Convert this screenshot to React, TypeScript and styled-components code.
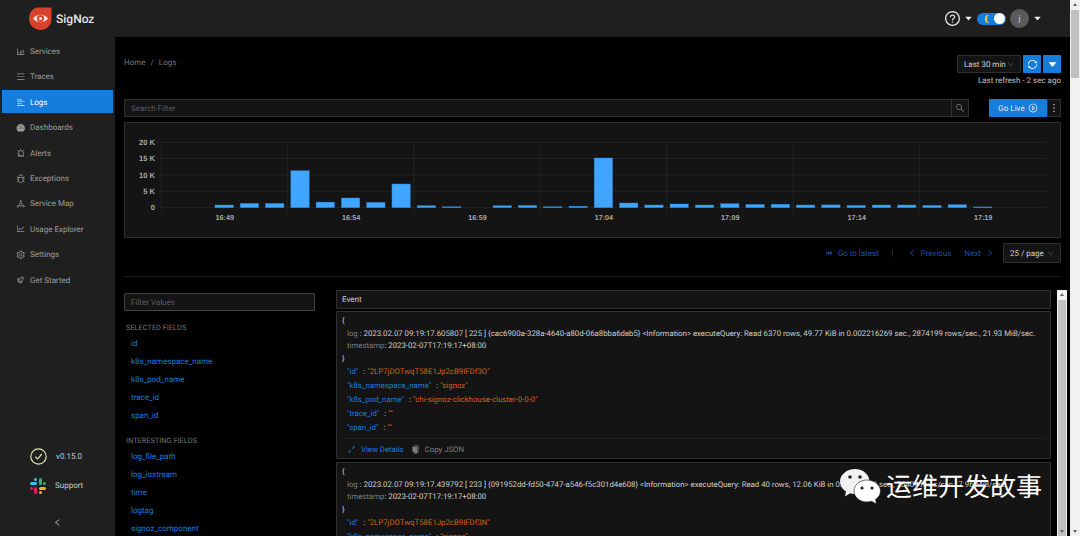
import React from 'react';
import styled, { createGlobalStyle } from 'styled-components';
import {
  AiFillCopy,
  AiFillDashboard,
  AiOutlineAlert,
  AiOutlineAlignLeft,
  AiOutlineBarChart,
  AiOutlineBug,
  AiOutlineCaretDown,
  AiOutlineDeploymentUnit,
  AiOutlineDown,
  AiOutlineExpandAlt,
  AiOutlineFastBackward,
  AiOutlineLeft,
  AiOutlineLineChart,
  AiOutlineMenu,
  AiOutlineMore,
  AiOutlinePlayCircle,
  AiOutlineQuestionCircle,
  AiOutlineRight,
  AiOutlineRocket,
  AiOutlineSearch,
  AiOutlineSetting,
  AiOutlineSync,
} from 'react-icons/ai';

const TiltedRocket = styled(AiOutlineRocket)`
  transform: rotate(45deg);
`;

const navItems = [
  { label: 'Services', icon: AiOutlineBarChart },
  { label: 'Traces', icon: AiOutlineMenu },
  { label: 'Logs', icon: AiOutlineAlignLeft, active: true },
  { label: 'Dashboards', icon: AiFillDashboard },
  { label: 'Alerts', icon: AiOutlineAlert },
  { label: 'Exceptions', icon: AiOutlineBug },
  { label: 'Service Map', icon: AiOutlineDeploymentUnit },
  { label: 'Usage Explorer', icon: AiOutlineLineChart },
  { label: 'Settings', icon: AiOutlineSetting },
  { label: 'Get Started', icon: TiltedRocket },
];

const selectedFields = ['id', 'k8s_namespace_name', 'k8s_pod_name', 'trace_id', 'span_id'];
const interestingFields = ['log_file_path', 'log_iostream', 'time', 'logtag', 'signoz_component'];

const bars = [
  2.7, 4.3, 4.3, 37, 5.6, 9.7, 5.3, 23.7, 2, 1, 0, 2, 2.3, 1, 1.5, 49.7, 4.7, 2.7, 3.7, 2.7, 4, 3.3,
  3.5, 2.7, 2.8, 2.3, 2.7, 2.7, 2.3, 3, 0.8,
];
const yTicks = ['20 K', '15 K', '10 K', '5 K', '0'];
const xTicks = ['16:49', '16:54', '16:59', '17:04', '17:09', '17:14', '17:19'];

const logs = [
  {
    line: '2023.02.07 09:19:17.605807 [ 225 ] {cac6900a-328a-4640-a80d-06a8bba6deb5} <Information> executeQuery: Read 6370 rows, 49.77 KiB in 0.002216269 sec., 2874199 rows/sec., 21.93 MiB/sec.',
    id: '2LP7jDOTwqT58E1Jp2cB9IFDf3O',
    pod: 'chi-signoz-clickhouse-cluster-0-0-0',
  },
  {
    line: '2023.02.07 09:19:17.439792 [ 233 ] {091952dd-fd50-4747-a546-f5c301d4e608} <Information> executeQuery: Read 40 rows, 12.06 KiB in 0.00151488 sec., 26404 rows/sec., 7.96 MiB/sec.',
    id: '2LP7jDOTwqT58E1Jp2cB9IFDf3N',
    pod: 'chi-signoz-clickhouse-cluster-0-0-0',
  },
];

const GlobalStyle = createGlobalStyle`
  html, body {
    margin: 0;
    height: 100%;
    overflow: hidden;
    background: #000;
  }
  * {
    box-sizing: border-box;
  }
  body {
    font-family: Roboto, "Liberation Sans", sans-serif;
    font-size: 8px;
    text-rendering: geometricPrecision;
    color: rgba(255, 255, 255, 0.8);
  }
`;

const Page = styled.div`
  position: relative;
  display: flex;
  width: 1080px;
  height: 536px;
  overflow: hidden;
`;

const Frame = styled.div`
  flex: 1;
  min-width: 0;
  display: flex;
  flex-direction: column;
`;

const Header = styled.header`
  height: 37px;
  flex: none;
  display: flex;
  align-items: center;
  padding: 0 28px 0 29px;
  background: #1f1f1f;
`;

const Brand = styled.div`
  display: flex;
  align-items: center;
  gap: 4px;
  font-size: 12px;
  font-weight: 500;
  color: #e4e4e4;
`;

const HeaderTools = styled.div`
  margin-left: auto;
  display: flex;
  align-items: center;
  color: #eee;
  svg {
    display: block;
  }
`;

const Toggle = styled.div`
  position: relative;
  width: 29px;
  height: 12px;
  margin: 0 4px 0 4px;
  border-radius: 6px;
  background: #177ddc;
`;

const Knob = styled.span`
  position: absolute;
  right: 1px;
  top: 0.5px;
  width: 11px;
  height: 11px;
  border-radius: 50%;
  background: #fff;
`;

const Moon = styled.span`
  position: absolute;
  left: 8px;
  top: 2px;
  width: 6px;
  height: 8px;
  border-radius: 50%;
  box-shadow: inset 2px 0 0 #f5c542;
`;

const Avatar = styled.div`
  width: 19px;
  height: 19px;
  margin-right: 4px;
  border-radius: 50%;
  background: #5a5a5a;
  display: flex;
  align-items: center;
  justify-content: center;
  color: #ddd;
`;

const Body = styled.div`
  flex: 1;
  min-height: 0;
  display: flex;
`;

const Sidebar = styled.aside`
  width: 115px;
  flex: none;
  display: flex;
  flex-direction: column;
  padding: 2.5px 2px 0;
  background: #1f1f1f;
`;

const NavItem = styled.div<{ $active?: boolean }>`
  height: 23px;
  flex: none;
  margin-bottom: 2.4px;
  padding-left: 14px;
  padding-top: 1px;
  display: flex;
  align-items: center;
  gap: 4.5px;
  color: ${(p) => (p.$active ? '#fff' : 'rgba(255, 255, 255, 0.55)')};
  background: ${(p) => (p.$active ? '#177ddc' : 'transparent')};
  svg {
    font-size: 9.5px;
    flex: none;
  }
`;

const SideFooter = styled.div`
  margin-top: auto;
  display: flex;
  flex-direction: column;
  padding-left: 28px;
  padding-bottom: 6px;
`;

const FooterRow = styled.div`
  display: flex;
  align-items: center;
  gap: 9px;
  height: 17px;
  margin-bottom: 12px;
  color: rgba(255, 255, 255, 0.75);
`;

const Collapse = styled.div`
  margin-top: 12px;
  padding-left: 23px;
  color: rgba(255, 255, 255, 0.7);
  font-size: 9px;
  line-height: 10px;
`;

const Main = styled.main`
  flex: 1;
  min-width: 0;
  display: flex;
  flex-direction: column;
  padding: 18px 3px 0 9px;
  background: #000;
`;

const Section = styled.div`
  margin-right: 6px;
  flex: none;
`;

const TopRow = styled(Section)`
  display: flex;
  justify-content: space-between;
  height: 31px;
`;

const Breadcrumb = styled.div`
  display: flex;
  gap: 5px;
  height: 15px;
  align-items: center;
  color: rgba(255, 255, 255, 0.45);
`;

const TimeBox = styled.div`
  display: flex;
  flex-direction: column;
  align-items: flex-end;
`;

const TimeControls = styled.div`
  display: flex;
  gap: 2px;
  height: 18px;
`;

const SelectBox = styled.div<{ $w: number }>`
  width: ${(p) => p.$w}px;
  height: 100%;
  padding: 0 6px 0 6px;
  display: flex;
  align-items: center;
  justify-content: space-between;
  white-space: nowrap;
  background: #141414;
  border: 1px solid #303030;
  border-radius: 1px;
  svg {
    font-size: 7px;
    flex: none;
    color: rgba(255, 255, 255, 0.3);
  }
`;

const SquareButton = styled.div`
  width: 18px;
  height: 18px;
  display: flex;
  align-items: center;
  justify-content: center;
  background: #177ddc;
  border-radius: 1px;
  color: #fff;
  font-size: 11px;
`;

const RefreshNote = styled.div`
  margin-top: 2px;
  line-height: 12px;
  color: rgba(255, 255, 255, 0.75);
`;

const SearchRow = styled(Section)`
  margin-top: 13px;
  height: 18px;
  display: flex;
  align-items: stretch;
`;

const SearchField = styled.div`
  flex: 1;
  display: flex;
  align-items: center;
  padding-left: 6px;
  background: #141414;
  border: 1px solid #303030;
  border-radius: 1px 0 0 1px;
  color: rgba(255, 255, 255, 0.3);
`;

const SearchButton = styled.div`
  width: 18px;
  margin-left: -1px;
  display: flex;
  align-items: center;
  justify-content: center;
  border: 1px solid #303030;
  background: #141414;
  color: rgba(255, 255, 255, 0.45);
  font-size: 10px;
`;

const GoLive = styled.div`
  width: 58px;
  margin-left: 20px;
  display: flex;
  align-items: center;
  justify-content: center;
  gap: 3px;
  background: #177ddc;
  border-radius: 1px;
  color: rgba(255, 255, 255, 0.9);
  svg {
    font-size: 10px;
  }
`;

const MoreButton = styled.div`
  width: 14px;
  display: flex;
  align-items: center;
  justify-content: center;
  background: #141414;
  border: 1px solid #303030;
  color: #eee;
  font-size: 14px;
`;

const ChartCard = styled(Section)`
  margin-top: 5px;
  height: 116px;
  background: #141414;
  border: 1px solid #303030;
  border-radius: 1px;
  svg {
    display: block;
  }
`;

const Pager = styled(Section)`
  margin-top: 5px;
  height: 20px;
  display: flex;
  align-items: center;
  justify-content: flex-end;
  color: #1554ad;
`;

const PagerLink = styled.div<{ $gap?: number }>`
  display: flex;
  align-items: center;
  gap: 5px;
  margin-right: ${(p) => p.$gap ?? 0}px;
  svg {
    font-size: 8px;
  }
`;

const PagerRule = styled.span`
  width: 1px;
  height: 7px;
  margin-right: 15px;
  background: #222;
`;

const PagerSelect = styled(SelectBox)`
  color: rgba(255, 255, 255, 0.8);
`;

const Divider = styled(Section)`
  margin-top: 13px;
  height: 1px;
  background: #1a1a1a;
`;

const LogsRow = styled.div`
  flex: 1;
  min-height: 0;
  margin-top: 13px;
  display: flex;
`;

const FieldsPanel = styled.div`
  width: 191px;
  flex: none;
  padding-top: 3px;
  overflow: hidden;
`;

const FilterInput = styled.div`
  height: 18px;
  display: flex;
  align-items: center;
  padding-left: 6px;
  margin-bottom: 9.5px;
  background: #141414;
  border: 1px solid #434343;
  border-radius: 1px;
  color: rgba(255, 255, 255, 0.3);
`;

const FieldTitle = styled.div<{ $top?: number }>`
  margin-top: ${(p) => p.$top ?? 0}px;
  padding-left: 2px;
  height: 14px;
  line-height: 14px;
  font-size: 7.4px;
  color: rgba(255, 255, 255, 0.45);
`;

const FieldName = styled.div`
  height: 18px;
  line-height: 18px;
  padding-left: 7px;
  color: #177ddc;
`;

const EventColumn = styled.div`
  width: 715px;
  margin-left: 21px;
  flex: none;
  display: flex;
  flex-direction: column;
  gap: 2px;
  overflow: hidden;
`;

const EventHeader = styled.div`
  height: 19px;
  flex: none;
  display: flex;
  align-items: center;
  padding-left: 5px;
  background: #141414;
  border: 1px solid #303030;
`;

const LogCard = styled.article`
  height: 148px;
  flex: none;
  margin-bottom: 1px;
  padding: 3px 5px 0;
  font-size: 7.8px;
  background: #141414;
  border: 1px solid #303030;
  border-radius: 1px;
`;

const Line = styled.div<{ $indent?: boolean }>`
  height: 12.5px;
  line-height: 12.5px;
  padding-left: ${(p) => (p.$indent ? 5 : 0)}px;
  white-space: nowrap;
  overflow: hidden;
`;

const Muted = styled.span`
  color: rgba(255, 255, 255, 0.45);
`;

const FieldLine = styled.div`
  height: 14px;
  line-height: 14px;
  padding-left: 5px;
  white-space: nowrap;
`;

const FieldKey = styled.span`
  color: #177ddc;
`;

const FieldColon = styled.span`
  margin: 0 2px 0 5px;
`;

const FieldValue = styled.span`
  color: #d4611a;
`;

const CardActions = styled.div`
  margin-top: 3px;
  height: 21px;
  padding-left: 5px;
  display: flex;
  align-items: center;
  gap: 7px;
  border-top: 1px solid #1f1f1f;
`;

const ActionLink = styled.span<{ $muted?: boolean }>`
  display: flex;
  align-items: center;
  gap: 5px;
  color: ${(p) => (p.$muted ? 'rgba(255, 255, 255, 0.45)' : '#177ddc')};
  svg {
    font-size: 9px;
  }
`;

const ScrollTrack = styled.div`
  position: relative;
  width: 10px;
  flex: none;
  background: #f1f1f1;
`;

const InnerScroll = styled(ScrollTrack)`
  margin-left: 6px;
`;

const ScrollThumb = styled.div<{ $top: number; $h: string }>`
  position: absolute;
  left: 1px;
  right: 1px;
  top: ${(p) => p.$top}px;
  height: ${(p) => p.$h};
  background: #c1c1c1;
`;

const ScrollArrow = styled.span<{ $up?: boolean }>`
  position: absolute;
  left: 3px;
  ${(p) => (p.$up ? 'top: 3px;' : 'bottom: 3px;')}
  width: 0;
  height: 0;
  border-left: 2px solid transparent;
  border-right: 2px solid transparent;
  ${(p) => (p.$up ? 'border-bottom' : 'border-top')}: 3px solid #666;
`;

const Watermark = styled.div`
  position: absolute;
  left: 839px;
  top: 467px;
  display: flex;
  align-items: center;
  gap: 5px;
  color: #fff;
  font-family: "Noto Sans CJK SC", sans-serif;
  font-size: 26px;
  line-height: 38px;
  pointer-events: none;
`;

const Logo = () => (
  <svg width="23" height="23" viewBox="0 0 23 23">
    <path d="M8 0.5 H22.5 V12 C22.5 18.5 17.5 23 11.5 23 C5 23 0 18 0 11.5 C0 6 3.5 1.5 8 0.5 Z" fill="#d8412a" />
    <path d="M4 11.5 C8 6.5 15 6.5 19 11.5 C15 16.5 8 16.5 4 11.5 Z" fill="#fbe5de" />
    <circle cx="11.5" cy="11.5" r="3.6" fill="#d8412a" />
    <circle cx="11.5" cy="11.5" r="1.6" fill="#fbe5de" />
  </svg>
);

const SlackLogo = () => (
  <svg width="16" height="16" viewBox="0 0 16 16">
    <rect x="0" y="4" width="7" height="3" rx="1.5" fill="#36c5f0" />
    <rect x="4" y="0" width="3" height="3" rx="1.5" fill="#36c5f0" />
    <rect x="9" y="0" width="3" height="7" rx="1.5" fill="#2eb67d" />
    <rect x="13" y="4" width="3" height="3" rx="1.5" fill="#2eb67d" />
    <rect x="9" y="9" width="7" height="3" rx="1.5" fill="#ecb22e" />
    <rect x="9" y="13" width="3" height="3" rx="1.5" fill="#ecb22e" />
    <rect x="4" y="9" width="3" height="7" rx="1.5" fill="#e01e5a" />
    <rect x="0" y="9" width="3" height="3" rx="1.5" fill="#e01e5a" />
  </svg>
);

const VersionCheck = () => (
  <svg width="17" height="17" viewBox="0 0 17 17" fill="none" stroke="#d6e6b5" strokeWidth="1.2">
    <circle cx="8.5" cy="8.5" r="7.7" />
    <path d="M5.2 8.7 L7.7 11 L11.8 6" />
  </svg>
);

const WeChat = () => (
  <svg width="42" height="37" viewBox="0 0 42 37">
    <path d="M16 1 C24 1 30.5 6.5 30.5 13.5 C30.5 20.5 24 26 16 26 C14 26 12.5 25.7 11 25.3 L6 28.5 L7 23.5 C3 21 1 17.5 1 13.5 C1 6.5 8 1 16 1 Z" fill="#f2f2f2" />
    <circle cx="11" cy="9" r="1.8" fill="#222" />
    <circle cx="21" cy="9" r="1.8" fill="#222" />
    <path d="M28 12 C35.5 12 41.5 17 41.5 23 C41.5 26.5 39.5 29.5 36.5 31.5 L37.5 36 L32.5 33.3 C31 33.7 29.5 34 28 34 C20.5 34 15 29 15 23 C15 17 20.5 12 28 12 Z" fill="#fff" stroke="#141414" strokeWidth="0.6" />
    <circle cx="23" cy="20" r="1.6" fill="#222" />
    <circle cx="33" cy="20" r="1.6" fill="#222" />
  </svg>
);

// coordinates are page pixels minus the card's top-left corner
const LogsChart = () => {
  const baseY = 84.7;
  const stepY = 16.34;
  return (
    <svg width="935" height="114" viewBox="0 0 935 114">
      {yTicks.map((t, i) => {
        const y = 19.3 + i * stepY;
        return (
          <g key={t}>
            <line x1="33" x2="921.7" y1={y} y2={y} stroke="#262626" strokeWidth="0.8" />
            <text x="30" y={y + 2.8} textAnchor="end" fontSize="7.6" fontWeight="700" fontFamily="Liberation Sans" fill="#a8a8a8">
              {t}
            </text>
          </g>
        );
      })}
      {[0, 1, 2, 3, 4, 5, 6].map((i) => {
        const x = 36.3 + i * 126.35;
        return <line key={i} x1={x} x2={x} y1="19.3" y2="90" stroke="#262626" strokeWidth="0.8" />;
      })}
      {bars.map((h, i) =>
        h > 0 ? (
          <rect key={i} x={90 + i * 25.28} y={baseY - h} width="18.4" height={h} fill="#3fa5ff" stroke="#2f7fc4" strokeWidth="0.4" />
        ) : null,
      )}
      {xTicks.map((t, i) => (
        <text key={t} x={99.7 + i * 126.4} y="96.7" textAnchor="middle" fontSize="7.2" fontWeight="700" fontFamily="Liberation Sans" fill="#a8a8a8">
          {t}
        </text>
      ))}
    </svg>
  );
};

const Field = ({ name, value }: { name: string; value: string }) => (
  <FieldLine>
    <FieldKey>"{name}"</FieldKey>
    <FieldColon>:</FieldColon>
    <FieldValue>"{value}"</FieldValue>
  </FieldLine>
);

const App = () => (
  <Page>
    <GlobalStyle />
    <Frame>
      <Header>
        <Brand>
          <Logo />
          SigNoz
        </Brand>
        <HeaderTools>
          <AiOutlineQuestionCircle size={17} />
          <AiOutlineCaretDown size={9} style={{ marginLeft: 3 }} />
          <Toggle>
            <Moon />
            <Knob />
          </Toggle>
          <Avatar>j</Avatar>
          <AiOutlineCaretDown size={9} />
        </HeaderTools>
      </Header>
      <Body>
        <Sidebar>
          {navItems.map(({ label, icon: Icon, active }) => (
            <NavItem key={label} $active={active}>
              <Icon />
              {label}
            </NavItem>
          ))}
          <SideFooter>
            <FooterRow>
              <VersionCheck />
              v0.15.0
            </FooterRow>
            <FooterRow>
              <SlackLogo />
              Support
            </FooterRow>
            <Collapse>
              <AiOutlineLeft />
            </Collapse>
          </SideFooter>
        </Sidebar>
        <Main>
          <TopRow>
            <Breadcrumb>
              <span>Home</span>
              <span>/</span>
              <span>Logs</span>
            </Breadcrumb>
            <TimeBox>
              <TimeControls>
                <SelectBox $w={64}>
                  Last 30 min
                  <AiOutlineDown />
                </SelectBox>
                <SquareButton>
                  <AiOutlineSync />
                </SquareButton>
                <SquareButton>
                  <AiOutlineCaretDown />
                </SquareButton>
              </TimeControls>
              <RefreshNote>Last refresh - 2 sec ago</RefreshNote>
            </TimeBox>
          </TopRow>
          <SearchRow>
            <SearchField>Search Filter</SearchField>
            <SearchButton>
              <AiOutlineSearch />
            </SearchButton>
            <GoLive>
              Go Live
              <AiOutlinePlayCircle />
            </GoLive>
            <MoreButton>
              <AiOutlineMore />
            </MoreButton>
          </SearchRow>
          <ChartCard>
            <LogsChart />
          </ChartCard>
          <Pager>
            <PagerLink $gap={13}>
              <AiOutlineFastBackward />
              Go to latest
            </PagerLink>
            <PagerRule />
            <PagerLink $gap={13}>
              <AiOutlineLeft />
              Previous
            </PagerLink>
            <PagerLink $gap={9}>
              Next
              <AiOutlineRight />
            </PagerLink>
            <PagerSelect $w={58}>
              25 / page
              <AiOutlineDown />
            </PagerSelect>
          </Pager>
          <Divider />
          <LogsRow>
            <FieldsPanel>
              <FilterInput>Filter Values</FilterInput>
              <FieldTitle>SELECTED FIELDS</FieldTitle>
              {selectedFields.map((f) => (
                <FieldName key={f}>{f}</FieldName>
              ))}
              <FieldTitle $top={9}>INTERESTING FIELDS</FieldTitle>
              {interestingFields.map((f) => (
                <FieldName key={f}>{f}</FieldName>
              ))}
            </FieldsPanel>
            <EventColumn>
              <EventHeader>Event</EventHeader>
              {logs.map((l) => (
                <LogCard key={l.id}>
                  <Line>{'{'}</Line>
                  <Line $indent>
                    <Muted>log</Muted> : {l.line}
                  </Line>
                  <Line $indent>
                    <Muted>timestamp</Muted>: 2023-02-07T17:19:17+08:00
                  </Line>
                  <Line>{'}'}</Line>
                  <Field name="id" value={l.id} />
                  <Field name="k8s_namespace_name" value="signoz" />
                  <Field name="k8s_pod_name" value={l.pod} />
                  <Field name="trace_id" value="" />
                  <Field name="span_id" value="" />
                  <CardActions>
                    <ActionLink>
                      <AiOutlineExpandAlt />
                      View Details
                    </ActionLink>
                    <ActionLink $muted>
                      <AiFillCopy />
                      Copy JSON
                    </ActionLink>
                  </CardActions>
                </LogCard>
              ))}
            </EventColumn>
            <InnerScroll>
              <ScrollArrow $up />
              <ScrollThumb $top={10} $h="300px" />
              <ScrollArrow />
            </InnerScroll>
          </LogsRow>
        </Main>
      </Body>
    </Frame>
    <ScrollTrack>
      <ScrollArrow $up />
      <ScrollThumb $top={10} $h="68px" />
      <ScrollArrow />
    </ScrollTrack>
    <Watermark>
      <WeChat />
      运维开发故事
    </Watermark>
  </Page>
);

export default App;
